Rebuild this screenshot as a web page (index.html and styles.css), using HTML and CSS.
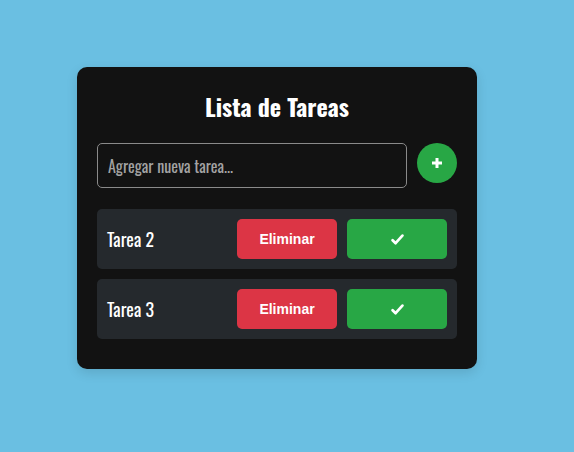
FILE: index.html
```html
<!DOCTYPE html>
<html lang="es">
<head>
<meta charset="utf-8">
<title>Lista de Tareas</title>
<link rel="stylesheet" href="styles.css">
</head>
<body>
<div class="card">
  <h2 class="title">Lista de Tareas</h2>
  <div class="add-row">
    <input class="task-input" type="text" placeholder="Agregar nueva tarea...">
    <button class="add-btn" aria-label="Agregar">
      <svg width="10" height="10" viewBox="0 0 10 10"><path d="M5 0v10M0 5h10" stroke="#fff" stroke-width="3"/></svg>
    </button>
  </div>
  <ul class="tasks">
    <li class="task">
      <span class="task-name">Tarea 2</span>
      <button class="btn btn-delete">Eliminar</button>
      <button class="btn btn-done" aria-label="Completar">
        <svg width="13" height="11" viewBox="0 0 13 11"><path d="M1.6 6.2 L4.6 9.2 L11.4 1.6" fill="none" stroke="#fff" stroke-width="2.7" stroke-linecap="round" stroke-linejoin="round"/></svg>
      </button>
    </li>
    <li class="task">
      <span class="task-name">Tarea 3</span>
      <button class="btn btn-delete">Eliminar</button>
      <button class="btn btn-done" aria-label="Completar">
        <svg width="13" height="11" viewBox="0 0 13 11"><path d="M1.6 6.2 L4.6 9.2 L11.4 1.6" fill="none" stroke="#fff" stroke-width="2.7" stroke-linecap="round" stroke-linejoin="round"/></svg>
      </button>
    </li>
  </ul>
</div>
</body>
</html>
```
FILE: styles.css
```css
html, body {
  margin: 0;
  padding: 0;
}
body {
  background: #6abfe2;
  width: 574px;
  height: 452px;
  font-family: "Oswald", "Roboto Condensed", sans-serif;
}
.card {
  box-sizing: border-box;
  width: 400px;
  margin: 67px 0 0 77px;
  padding: 20px 20px 20px;
  background: #121212;
  border-radius: 10px;
  box-shadow: 0 4px 12px rgba(0, 0, 0, 0.12);
}
.title {
  margin: 0 0 20px;
  height: 36px;
  line-height: 38px;
  text-align: center;
  color: #fff;
  font-size: 24px;
  font-weight: bold;
}
.add-row {
  display: flex;
  align-items: flex-start;
  gap: 10px;
  margin-bottom: 21px;
}
.task-input {
  box-sizing: border-box;
  width: 310px;
  height: 45px;
  padding: 0 10px;
  background: #121212;
  border: 1px solid #8a8a8a;
  border-radius: 5px;
  color: #ddd;
  font-family: inherit;
  font-size: 16px;
  outline: none;
}
.task-input::placeholder {
  color: #a3a3a3;
}
.add-btn {
  width: 40px;
  height: 40px;
  border: none;
  border-radius: 50%;
  background: #28a745;
  padding: 0;
  display: flex;
  align-items: center;
  justify-content: center;
}
.tasks {
  list-style: none;
  margin: 0;
  padding: 0;
}
.task {
  display: flex;
  align-items: center;
  gap: 10px;
  height: 60px;
  padding: 0 10px;
  margin-bottom: 10px;
  background: #25292d;
  border-radius: 5px;
}
.task-name {
  flex: 1;
  color: #fff;
  font-size: 18px;
  font-weight: 400;
}
.btn {
  width: 100px;
  height: 40px;
  border: none;
  border-radius: 5px;
  color: #fff;
  font-family: "Liberation Sans", Arial, sans-serif;
  font-size: 14px;
  font-weight: bold;
  padding: 0;
}
.btn-delete {
  background: #dc3545;
}
.btn-done {
  background: #28a745;
  display: flex;
  align-items: center;
  justify-content: center;
}
```
